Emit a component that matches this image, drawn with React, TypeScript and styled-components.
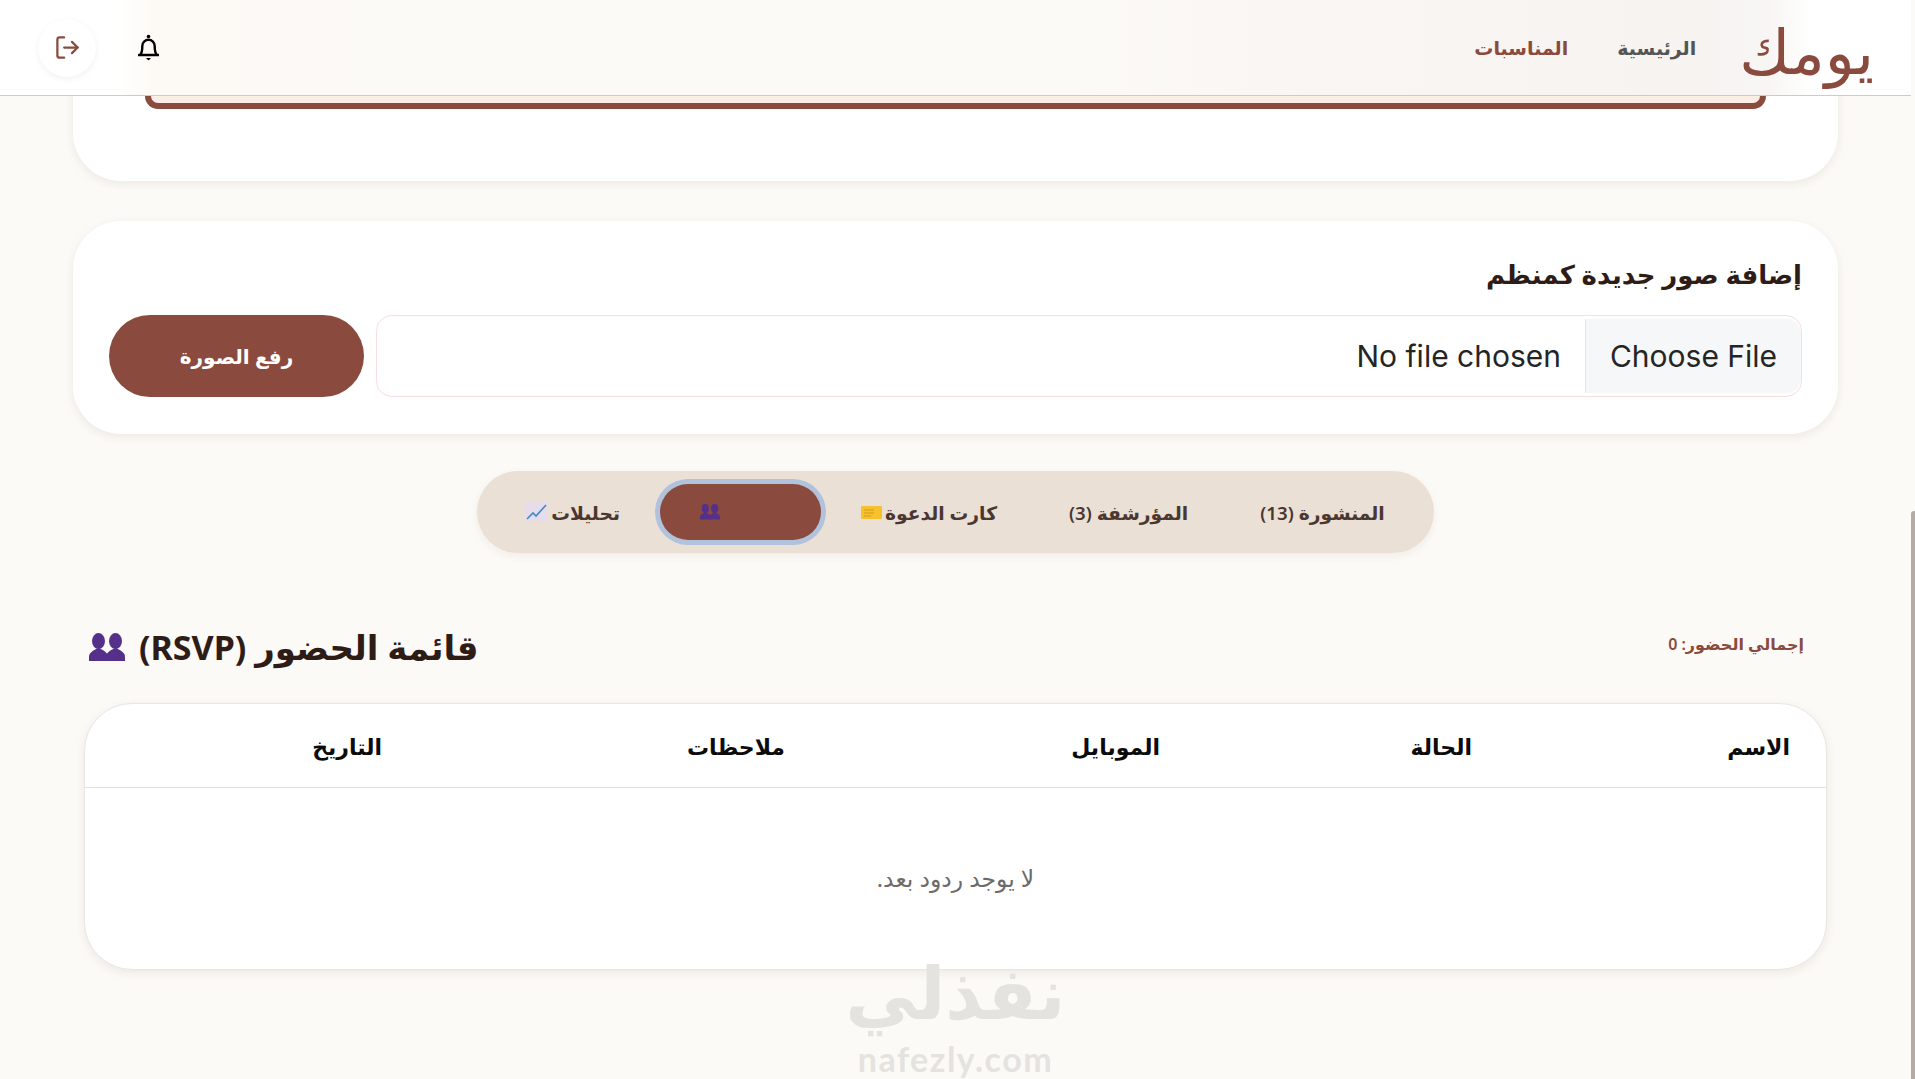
import { FC } from "react";
import styled, { createGlobalStyle } from "styled-components";
import { LogOut } from "lucide-react";

const MAROON = "#8b4a3e";

const GlobalStyle = createGlobalStyle`
  html, body {
    margin: 0;
    height: 100%;
    overflow: hidden;
    background: #fcfaf6;
  }
  body {
    font-family: "Noto Sans", "DejaVu Sans", sans-serif;
    color: #3a241c;
  }
`;

const Page = styled.div`
  position: relative;
  width: 1915px;
  height: 1079px;
  overflow: hidden;
  background: #fcfaf6;
`;

const Header = styled.header`
  position: absolute;
  top: 0;
  left: 0;
  right: 4px;
  height: 96px;
  z-index: 5;
  display: flex;
  justify-content: space-between;
  align-items: center;
  padding: 0 37px 0 38px;
  box-sizing: border-box;
  direction: rtl;
  background: linear-gradient(
    to right,
    #ffffff 118px,
    #fdfaf6 150px,
    #fcfaf6 1050px,
    #f9f6f3 1300px,
    #f6f3f1 1700px,
    #f8f6f4 1770px,
    #ffffff 1810px
  );
  border-bottom: 1px solid #d4c9c2;
`;

const Brand = styled.div`
  display: flex;
  align-items: center;
  gap: 43px;
`;

const Logo = styled.span`
  margin-top: 4px;
  font-size: 62px;
  line-height: 1;
  color: ${MAROON};
`;

const Nav = styled.nav`
  display: flex;
  gap: 49px;
`;

const NavLink = styled.a<{ $active?: boolean }>`
  font-size: 19px;
  font-weight: 600;
  color: ${(p) => (p.$active ? MAROON : "#555")};
`;

const HeaderActions = styled.div`
  display: flex;
  align-items: center;
  gap: 23px;
`;

const RoundButton = styled.button<{ $raised?: boolean }>`
  width: 58px;
  height: 58px;
  border: none;
  border-radius: 50%;
  display: flex;
  align-items: center;
  justify-content: center;
  padding: 0;
  background: ${(p) => (p.$raised ? "#fff" : "transparent")};
  box-shadow: ${(p) => (p.$raised ? "0 2px 6px rgba(0,0,0,.06)" : "none")};
`;

const Main = styled.main`
  direction: rtl;
  padding: 0 77px 0 73px;
  display: flex;
  flex-direction: column;
`;

const Card = styled.section`
  background: #fff;
  border-radius: 48px;
  box-shadow: 0 3px 10px rgba(60, 40, 30, 0.08);
  box-sizing: border-box;
`;

const TopCard = styled(Card)`
  height: 181px;
  padding: 96px 72px 0;
  border-radius: 0 0 48px 48px;
`;

const PanelEnd = styled.div`
  height: 13px;
  box-sizing: border-box;
  border: 6px solid ${MAROON};
  border-top: none;
  border-radius: 0 0 16px 16px;
  background: #faeee6;
`;

const UploadCard = styled(Card)`
  margin-top: 40px;
  height: 213px;
  padding: 33px 36px 0;
`;

const UploadTitle = styled.h2`
  margin: 0;
  font-size: 26px;
  line-height: 40px;
  font-weight: 700;
  color: #2e1c16;
`;

const UploadRow = styled.div`
  margin-top: 21px;
  display: flex;
  gap: 12px;
`;

const FileField = styled.div`
  flex: 1;
  height: 82px;
  box-sizing: border-box;
  border: 1px solid #f8dde0;
  border-radius: 16px;
  display: flex;
  align-items: stretch;
  padding: 3px 0;
  font-family: "Inter", "Liberation Sans", sans-serif;
  font-size: 30px;
  color: #252525;
`;

const FileButton = styled.span`
  width: 215px;
  display: flex;
  align-items: center;
  justify-content: center;
  background: #f6f7f8;
  border-left: 1px solid #e6e6e6;
  border-radius: 0 14px 14px 0;
  direction: ltr;
`;

const FileName = styled.span`
  padding: 0 24px;
  display: flex;
  align-items: center;
  direction: ltr;
`;

const UploadButton = styled.button`
  width: 255px;
  height: 82px;
  border: none;
  border-radius: 41px;
  background: ${MAROON};
  color: #fff;
  font-family: inherit;
  font-size: 20px;
  font-weight: 700;
`;

const TabsWrap = styled.div`
  margin-top: 37px;
  display: flex;
  justify-content: center;
`;

const Tabs = styled.div`
  height: 82px;
  box-sizing: border-box;
  padding: 0 14px;
  border-radius: 41px;
  background: #ebe0d6;
  box-shadow: 0 3px 8px rgba(60, 40, 30, 0.06);
  display: flex;
  align-items: center;
  gap: 2px;
`;

const Tab = styled.button<{ $active?: boolean }>`
  height: 56px;
  width: ${(p) => (p.$active ? "161px" : "auto")};
  padding: ${(p) => (p.$active ? "0 28px 0 40px" : "0 35px")};
  margin: 0 ${(p) => (p.$active ? "3px" : "0")};
  border: none;
  border-radius: 28px;
  display: flex;
  align-items: center;
  justify-content: ${(p) => (p.$active ? "space-between" : "flex-start")};
  gap: 3px;
  white-space: nowrap;
  font-family: inherit;
  font-size: 18.7px;
  font-weight: 600;
  color: ${(p) => (p.$active ? MAROON : "#4a3730")};
  background: ${(p) => (p.$active ? MAROON : "transparent")};
  box-shadow: ${(p) => (p.$active ? "0 0 0 5px #b1c3dc" : "none")};

  svg {
    flex-shrink: 0;
  }
`;

const SectionHead = styled.div`
  margin-top: 58px;
  padding: 0 34px 0 16px;
  height: 72px;
  display: flex;
  justify-content: space-between;
  align-items: center;
`;

const Total = styled.span`
  margin-bottom: 6px;
  font-size: 16px;
  font-weight: 600;
  color: ${MAROON};
`;

const SectionTitle = styled.h3`
  margin: 0;
  display: flex;
  align-items: center;
  gap: 14px;
  font-size: 34px;
  font-weight: 700;
  color: #2e1c16;
`;

const TableCard = styled.div`
  margin: 20px 11px 0;
  height: 267px;
  box-sizing: border-box;
  border: 1px solid #e8e6e4;
  border-radius: 48px;
  background: #fff;
  box-shadow: 0 3px 10px rgba(60, 40, 30, 0.08);
`;

const Columns = styled.div`
  height: 84px;
  box-sizing: border-box;
  border-bottom: 1px solid #e2e0e0;
  display: grid;
  grid-template-columns: 318px 312px 375px 403px 1fr;
  align-items: center;
  padding: 0 36px;
  font-size: 22px;
  font-weight: 700;
  color: #0b0b0b;
`;

const EmptyRow = styled.div`
  height: 180px;
  display: flex;
  align-items: center;
  justify-content: center;
  font-size: 23.5px;
  color: #6b6b6b;
`;

const Watermark = styled.div`
  position: absolute;
  left: 0;
  right: 4px;
  top: 950px;
  text-align: center;
  color: #e4e3e0;
  font-weight: 800;
`;

const WatermarkAr = styled.div`
  font-family: "DejaVu Sans", sans-serif;
  font-size: 72px;
  line-height: 88px;
`;

const WatermarkEn = styled.div`
  font-family: "Lato", sans-serif;
  font-size: 34px;
  font-weight: 700;
  line-height: 41px;
  letter-spacing: 1.5px;
`;

const ScrollThumb = styled.div`
  position: absolute;
  top: 511px;
  right: 0;
  bottom: 0;
  width: 4px;
  border-radius: 3px 0 0 0;
  background: #b5aaa4;
`;

const PeopleIcon: FC<{ size: number }> = ({ size }) => (
  <svg width={size} height={size * 0.78} viewBox="0 0 36 28" fill="#54308a">
    <ellipse cx="9.500" cy="8" rx="6.500" ry="8" />
    <path d="M0 28v-4c0-4 3-6 9.500-9 6.500 3 9.500 5 9.500 9v4z" />
    <ellipse cx="26.500" cy="8" rx="6.500" ry="8" />
    <path d="M17 28v-4c0-4 3-6 9.500-9 6.500 3 9.500 5 9.500 9v4z" />
  </svg>
);

const TicketIcon = () => (
  <svg width="21" height="13" viewBox="0 0 21 13">
    <rect width="21" height="13" rx="1" fill="#f5c22e" />
    <path d="M3 4h10M3 7h10M3 10h7" stroke="#d99a1c" strokeWidth="1" />
  </svg>
);

const ChartIcon = () => (
  <svg width="22" height="20" viewBox="0 0 22 20">
    <rect width="22" height="20" fill="#e6dcea" />
    <path d="M1 17l6-6 3 3 10-11" stroke="#3f8ac9" strokeWidth="1.6" fill="none" />
  </svg>
);

const BellIcon = () => (
  <svg width="21" height="27" viewBox="0 0 21 27" fill="none">
    <circle cx="10.500" cy="2.500" r="1.800" fill="#000" />
    <path
      d="M2.500 20.500c1.500-2 1.800-4 1.800-8.500a6.200 6.200 0 0 1 12.400 0c0 4.500.3 6.500 1.800 8.500"
      stroke="#000"
      strokeWidth="2.400"
    />
    <path d="M.8 21h19.400" stroke="#000" strokeWidth="2.600" strokeLinecap="round" />
    <path d="M8 24h5l-2.500 2.500z" fill="#000" />
  </svg>
);

const App: FC = () => {
  return (
    <Page>
      <GlobalStyle />
      <Header>
        <Brand>
          <Logo>يومك</Logo>
          <Nav>
            <NavLink>الرئيسية</NavLink>
            <NavLink $active>المناسبات</NavLink>
          </Nav>
        </Brand>
        <HeaderActions>
          <RoundButton>
            <BellIcon />
          </RoundButton>
          <RoundButton $raised>
            <LogOut size={27} color={MAROON} strokeWidth={2} />
          </RoundButton>
        </HeaderActions>
      </Header>

      <Main>
        <TopCard>
          <PanelEnd />
        </TopCard>

        <UploadCard>
          <UploadTitle>إضافة صور جديدة كمنظم</UploadTitle>
          <UploadRow>
            <FileField>
              <FileButton>Choose File</FileButton>
              <FileName>No file chosen</FileName>
            </FileField>
            <UploadButton>رفع الصورة</UploadButton>
          </UploadRow>
        </UploadCard>

        <TabsWrap>
          <Tabs>
            <Tab>المنشورة (13)</Tab>
            <Tab>المؤرشفة (3)</Tab>
            <Tab>
              كارت الدعوة <TicketIcon />
            </Tab>
            <Tab $active>
              الحضور <PeopleIcon size={20} />
            </Tab>
            <Tab>
              تحليلات <ChartIcon />
            </Tab>
          </Tabs>
        </TabsWrap>

        <SectionHead>
          <Total>إجمالي الحضور: 0</Total>
          <SectionTitle>
            قائمة الحضور (RSVP) <PeopleIcon size={36} />
          </SectionTitle>
        </SectionHead>

        <TableCard>
          <Columns>
            <span>الاسم</span>
            <span>الحالة</span>
            <span>الموبايل</span>
            <span>ملاحظات</span>
            <span>التاريخ</span>
          </Columns>
          <EmptyRow>لا يوجد ردود بعد.</EmptyRow>
        </TableCard>
      </Main>

      <Watermark>
        <WatermarkAr>نفذلي</WatermarkAr>
        <WatermarkEn>nafezly.com</WatermarkEn>
      </Watermark>
      <ScrollThumb />
    </Page>
  );
};

export default App;
